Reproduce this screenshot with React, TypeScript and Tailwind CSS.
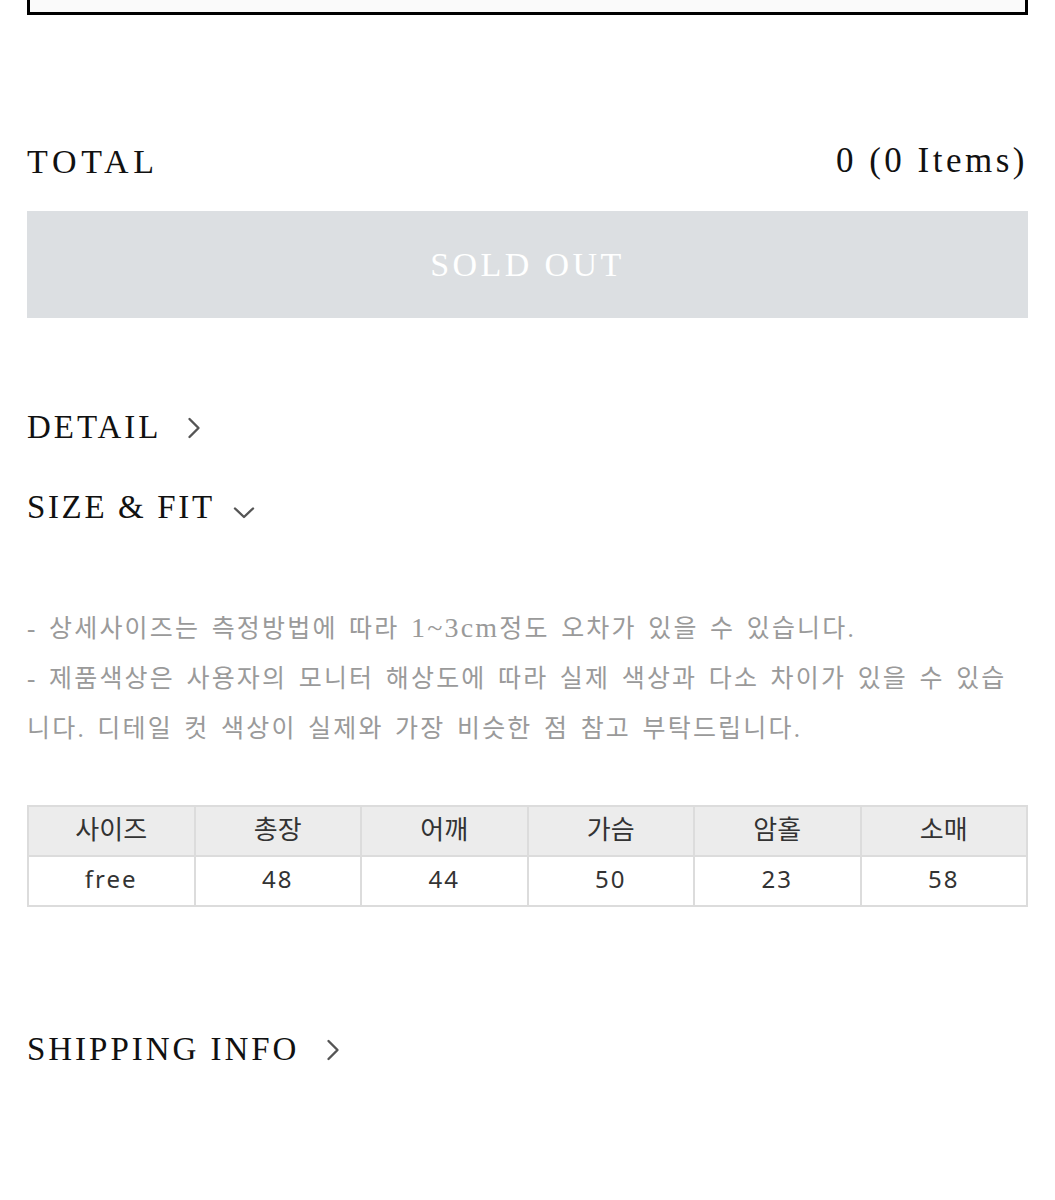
import React from 'react';

const serif = "font-['Liberation_Serif',_'Times_New_Roman',_serif]";

const ChevronRight: React.FC = () => (
    <svg width="14" height="22" viewBox="0 0 14 22" fill="none" className="shrink-0">
        <path d="M2.5 2 L11.5 11 L2.5 20" stroke="#555" strokeWidth="2.4" strokeLinecap="round" strokeLinejoin="round" />
    </svg>
);

const ChevronDown: React.FC = () => (
    <svg width="22" height="13" viewBox="0 0 22 13" fill="none" className="shrink-0 mt-2">
        <path d="M2 2.5 L11 11 L20 2.5" stroke="#555" strokeWidth="2.4" strokeLinecap="round" strokeLinejoin="round" />
    </svg>
);

const sizes = [
    { label: '사이즈', value: 'free' },
    { label: '총장', value: '48' },
    { label: '어깨', value: '44' },
    { label: '가슴', value: '50' },
    { label: '암홀', value: '23' },
    { label: '소매', value: '58' },
];

const App: React.FC = () => {
    return (
        <div className="min-h-[1200px] bg-white px-[27px]">
            {/* option box (cut off at top) */}
            <div className="h-[15px] border-x-[3px] border-b-[3px] border-black bg-[#fafafa]" />

            {/* Total */}
            <div className={`mt-[121px] flex h-[50px] items-center justify-between text-[#111] ${serif}`}>
                <span className="text-[34px] tracking-[0.14em]">TOTAL</span>
                <span className="text-[35px] tracking-[0.1em]">0 (0 Items)</span>
            </div>

            {/* Sold out */}
            <div className={`mt-[25px] flex h-[107px] items-center justify-center bg-[#dcdfe2] ${serif}`}>
                <span className="text-[34px] tracking-[0.1em] text-white">SOLD OUT</span>
            </div>

            {/* Detail */}
            <div className={`mt-[85px] flex h-[50px] items-center gap-[26px] text-[#111] ${serif}`}>
                <span className="text-[33px] tracking-[0.09em]">DETAIL</span>
                <ChevronRight />
            </div>

            {/* Size & fit */}
            <div className={`mt-[30px] flex h-[50px] items-center gap-[18px] text-[#111] ${serif}`}>
                <span className="text-[33px] tracking-[0.08em]">SIZE &amp; FIT</span>
                <ChevronDown />
            </div>

            {/* Notes */}
            <div className="mt-[70px] font-['Liberation_Serif',_'Noto_Sans_CJK_KR',_serif] text-[25px] leading-[50px] tracking-[2.2px] text-[#9a9a9a] [word-spacing:3px]">
                <div className="whitespace-nowrap">
                    - 상세사이즈는 측정방법에 따라 <span className="text-[28px]">1~3cm</span>정도 오차가 있을 수 있습니다.
                </div>
                <div className="whitespace-nowrap">- 제품색상은 사용자의 모니터 해상도에 따라 실제 색상과 다소 차이가 있을 수 있습</div>
                <div className="whitespace-nowrap">니다. 디테일 컷 색상이 실제와 가장 비슷한 점 참고 부탁드립니다.</div>
            </div>

            {/* Size table */}
            <table className="mt-[51px] w-full table-fixed border-collapse font-['Noto_Sans',_'Noto_Sans_CJK_KR',_sans-serif] text-[#333]">
                <thead>
                    <tr>
                        {sizes.map((s) => (
                            <th key={s.label} className="h-[50px] border-[2px] border-[#dcdcdc] bg-[#ececec] p-0 pb-[4px] text-[26px] font-normal">
                                {s.label}
                            </th>
                        ))}
                    </tr>
                </thead>
                <tbody>
                    <tr>
                        {sizes.map((s) => (
                            <td key={s.label} className="h-[50px] border-[2px] border-[#dcdcdc] p-0 pb-[4px] text-center text-[24px] tracking-[2px]">
                                {s.value}
                            </td>
                        ))}
                    </tr>
                </tbody>
            </table>

            {/* Shipping info */}
            <div className={`mt-[118px] flex h-[50px] items-center gap-[27px] text-[#111] ${serif}`}>
                <span className="text-[33px] tracking-[0.09em]">SHIPPING INFO</span>
                <ChevronRight />
            </div>
        </div>
    );
};

export default App;
